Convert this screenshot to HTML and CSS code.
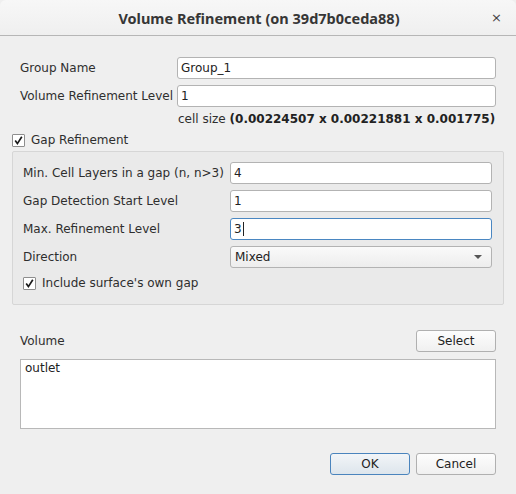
FILE: index.html
```html
<!DOCTYPE html>
<html>
<head>
<meta charset="utf-8">
<link rel="stylesheet" href="styles.css">
</head>
<body>
<div class="window">
  <div class="titlebar">
    <span class="title">Volume Refinement (on 39d7b0ceda88)</span>
    <span class="close">×</span>
  </div>
  <div class="content">
    <div class="form">
      <div class="row">
        <label class="lbl">Group Name</label>
        <div class="input">Group_1</div>
      </div>
      <div class="row">
        <label class="lbl">Volume Refinement Level</label>
        <div class="input">1</div>
      </div>
      <div class="cellsize">cell size <b>(0.00224507 x 0.00221881 x 0.001775)</b></div>
    </div>
    <div class="check top-check"><span class="box"><svg width="11" height="11" viewBox="0 0 11 11"><path d="M2.2 5.6 L4.4 8.6 L8.8 1.8" fill="none" stroke="#1a1a1a" stroke-width="1.7" stroke-linejoin="miter"/></svg></span><span>Gap Refinement</span></div>
    <div class="group">
      <div class="grow">
        <label class="glbl">Min. Cell Layers in a gap (n, n&gt;3)</label>
        <div class="input">4</div>
      </div>
      <div class="grow">
        <label class="glbl">Gap Detection Start Level</label>
        <div class="input">1</div>
      </div>
      <div class="grow">
        <label class="glbl">Max. Refinement Level</label>
        <div class="input focus">3<span class="caret"></span></div>
      </div>
      <div class="grow">
        <label class="glbl">Direction</label>
        <div class="combo"><span>Mixed</span><span class="arrow"></span></div>
      </div>
      <div class="check inner-check"><span class="box"><svg width="11" height="11" viewBox="0 0 11 11"><path d="M2.2 5.6 L4.4 8.6 L8.8 1.8" fill="none" stroke="#1a1a1a" stroke-width="1.7" stroke-linejoin="miter"/></svg></span><span>Include surface's own gap</span></div>
    </div>
    <div class="volume">
      <div class="vhead">
        <span>Volume</span>
        <div class="btn">Select</div>
      </div>
      <div class="textarea">outlet</div>
    </div>
    <div class="buttons">
      <div class="btn default">OK</div>
      <div class="btn">Cancel</div>
    </div>
  </div>
</div>
</body>
</html>
```

FILE: styles.css
```css
* { box-sizing: border-box; }
html, body { margin: 0; padding: 0; background: #efefef; }
body {
  font-family: "DejaVu Sans", sans-serif;
  font-size: 12px;
  color: #2e2e2e;
}
.window {
  width: 516px;
  height: 494px;
  background: #efefef;
  display: flex;
  flex-direction: column;
  overflow: hidden;
}
.titlebar {
  height: 36px;
  flex: none;
  background: linear-gradient(#f7f7f7, #efefef);
  border-bottom: 1px solid #b6b6b6;
  border-radius: 6px 6px 0 0;
  display: flex;
  align-items: center;
  justify-content: center;
  position: relative;
}
.title {
  font-family: "Noto Sans", sans-serif;
  font-weight: bold;
  font-size: 14.5px;
  color: #363636;
  padding-top: 1px;
  padding-left: 2px;
}
.close {
  position: absolute;
  right: 14px;
  top: 10px;
  font-size: 13px;
  color: #444;
}
.content {
  padding: 21px 12px 0 12px;
  display: flex;
  flex-direction: column;
}
.form {
  padding: 0 8px;
  display: flex;
  flex-direction: column;
  gap: 6px;
}
.row, .grow {
  display: flex;
  align-items: center;
  height: 22px;
}
.lbl { width: 157px; flex: none; }
.glbl { width: 207px; flex: none; }
.input {
  flex: 1;
  height: 22px;
  background: #fff;
  border: 1px solid #b3b3b3;
  border-radius: 3px;
  padding: 0 3px;
  line-height: 20px;
  color: #222;
  display: flex;
  align-items: center;
}
.input.focus { border-color: #4a87c2; }
.caret {
  display: inline-block;
  width: 1px;
  height: 14px;
  background: #222;
  margin-left: 1px;
}
.cellsize {
  margin-left: 158px;
  height: 16px;
  line-height: 16px;
  margin-top: -2px;
}
.cellsize b { color: #222; }
.check {
  display: flex;
  align-items: center;
  height: 16px;
  gap: 6px;
}
.box {
  width: 13px;
  height: 13px;
  background: #fff;
  border: 1px solid #8e8e8e;
  border-radius: 1px;
  flex: none;
  display: flex;
  align-items: center;
  justify-content: center;
}
.box svg { display: block; }
.top-check { margin-top: 5px; }
.group {
  margin-top: 3px;
  background: #eaeaea;
  border: 1px solid #d6d6d6;
  border-radius: 2px;
  padding: 10px 11px 13px 10px;
  display: flex;
  flex-direction: column;
  gap: 6px;
}
.inner-check { margin-top: 1px; }
.combo {
  flex: 1;
  height: 22px;
  background: linear-gradient(#fafafa, #ededed);
  border: 1px solid #b3b3b3;
  border-radius: 3px;
  padding: 0 4px;
  display: flex;
  align-items: center;
  justify-content: space-between;
  color: #222;
}
.arrow {
  width: 0;
  height: 0;
  border-left: 4px solid transparent;
  border-right: 4px solid transparent;
  border-top: 4px solid #555;
  margin-right: 5px;
}
.volume {
  margin-top: 25px;
  padding: 0 8px;
  display: flex;
  flex-direction: column;
  gap: 7px;
}
.vhead {
  display: flex;
  align-items: center;
  justify-content: space-between;
  height: 22px;
}
.btn {
  width: 80px;
  height: 22px;
  border: 1px solid #b0b0b0;
  border-radius: 3px;
  background: linear-gradient(#fdfdfd, #f0f0f0);
  display: flex;
  align-items: center;
  justify-content: center;
  color: #222;
}
.btn.default {
  border-color: #4a84bd;
  background: linear-gradient(#f2f5f8, #dde5ec);
}
.textarea {
  height: 70px;
  background: #fff;
  border: 1px solid #b8b8b8;
  padding: 1px 4px;
  line-height: 15px;
  color: #222;
}
.buttons {
  margin-top: 24px;
  padding-right: 8px;
  display: flex;
  justify-content: flex-end;
  gap: 6px;
}
```
